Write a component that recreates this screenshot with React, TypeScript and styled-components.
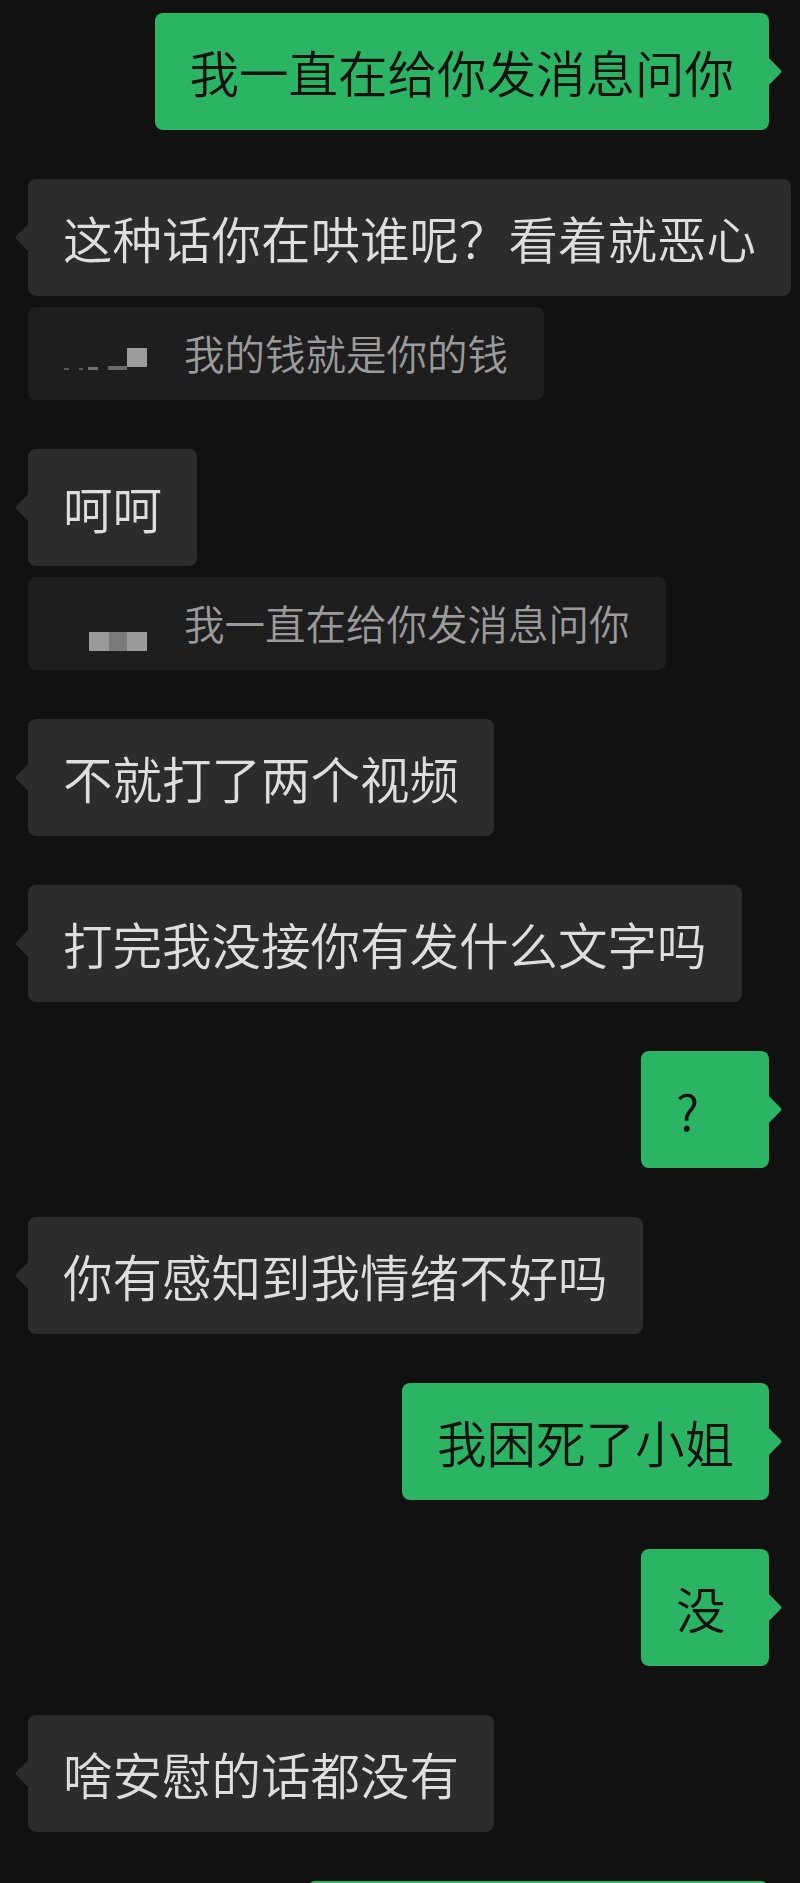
import React from 'react';
import styled, { createGlobalStyle, css } from 'styled-components';

const GlobalStyle = createGlobalStyle`
  html, body {
    margin: 0;
    padding: 0;
    background: #111111;
  }
  body {
    font-family: "Noto Sans CJK SC", "Noto Sans", sans-serif;
  }
`;

type MaskPiece = { w: number; h: number; shade: string; lift: number; gap?: number };

type Message = {
  id: number;
  mine?: boolean;
  text: string;
  width?: number;
  quote?: { text: string; mask: MaskPiece[] };
};

const messages: Message[] = [
  { id: 1, mine: true, text: '我一直在给你发消息问你' },
  {
    id: 2,
    text: '这种话你在哄谁呢？看着就恶心',
    quote: {
      text: '我的钱就是你的钱',
      mask: [
        { w: 5, h: 2, shade: '#5a5a5a', lift: 11, gap: 10 },
        { w: 4, h: 2, shade: '#5a5a5a', lift: 11, gap: 5 },
        { w: 10, h: 3, shade: '#707070', lift: 11, gap: 10 },
        { w: 19, h: 4, shade: '#6a6a6a', lift: 11 },
        { w: 20, h: 19, shade: '#9c9c9c', lift: 14 },
      ],
    },
  },
  {
    id: 3,
    text: '呵呵',
    quote: {
      text: '我一直在给你发消息问你',
      mask: [
        { w: 20, h: 19, shade: '#9a9a9a', lift: 0 },
        { w: 18, h: 19, shade: '#7a7a7a', lift: 0 },
        { w: 20, h: 19, shade: '#9a9a9a', lift: 0 },
      ],
    },
  },
  { id: 4, text: '不就打了两个视频' },
  { id: 5, text: '打完我没接你有发什么文字吗' },
  { id: 6, mine: true, text: '?' },
  { id: 7, text: '你有感知到我情绪不好吗' },
  { id: 8, mine: true, text: '我困死了小姐' },
  { id: 9, mine: true, text: '没' },
  { id: 10, text: '啥安慰的话都没有' },
  { id: 11, mine: true, text: '', width: 462 },
];

const Chat = styled.main`
  display: flex;
  flex-direction: column;
  gap: 49px;
  padding: 13px 31px 0 28px;
  height: 1883px;
  overflow: hidden;
  box-sizing: border-box;
`;

const Group = styled.div<{ $mine?: boolean }>`
  display: flex;
  flex-direction: column;
  gap: 11px;
  align-items: ${(p) => (p.$mine ? 'flex-end' : 'flex-start')};
`;

const Bubble = styled.div<{ $mine?: boolean; $width?: number }>`
  position: relative;
  box-sizing: border-box;
  min-width: 128px;
  min-height: 117px;
  padding: 24px 35px;
  border-radius: 8px;
  font-size: 49.5px;
  font-weight: 350;
  line-height: 69px;
  white-space: nowrap;
  background: ${(p) => (p.$mine ? '#2bb464' : '#2c2c2c')};
  color: ${(p) => (p.$mine ? '#111111' : '#dedede')};
  ${(p) => p.$width && css`width: ${p.$width}px;`}

  &::before {
    content: '';
    position: absolute;
    top: 48px;
    width: 21px;
    height: 21px;
    border-radius: 3px;
    background: inherit;
    transform: rotate(45deg);
    ${(p) => (p.$mine ? css`right: -9px;` : css`left: -9px;`)}
  }
`;

const Quote = styled.div`
  display: flex;
  align-items: stretch;
  box-sizing: border-box;
  padding: 18px 36px 19px 36px;
  border-radius: 8px;
  background: #1e1e1e;
  color: #9b9b9b;
  font-size: 40.5px;
  font-weight: 350;
  line-height: 56px;
  white-space: nowrap;
`;

const NameMask = styled.span`
  display: flex;
  align-items: flex-end;
  justify-content: flex-end;
  width: 120px;
  padding-right: 37px;
  box-sizing: border-box;
`;

const MaskBlock = styled.span<{ $w: number; $h: number; $shade: string; $lift: number; $gap: number }>`
  display: block;
  flex: none;
  width: ${(p) => p.$w}px;
  height: ${(p) => p.$h}px;
  margin-bottom: ${(p) => p.$lift}px;
  margin-right: ${(p) => p.$gap}px;
  background: ${(p) => p.$shade};
  filter: blur(0.4px);
`;

export default function App() {
  return (
    <>
      <GlobalStyle />
      <Chat>
        {messages.map((m) => (
          <Group key={m.id} $mine={m.mine}>
            <Bubble $mine={m.mine} $width={m.width}>
              {m.text}
            </Bubble>
            {m.quote && (
              <Quote>
                <NameMask>
                  {m.quote.mask.map((b, i) => (
                    <MaskBlock
                      key={i}
                      $w={b.w}
                      $h={b.h}
                      $shade={b.shade}
                      $lift={b.lift}
                      $gap={b.gap ?? 0}
                    />
                  ))}
                </NameMask>
                <span>{m.quote.text}</span>
              </Quote>
            )}
          </Group>
        ))}
      </Chat>
    </>
  );
}
